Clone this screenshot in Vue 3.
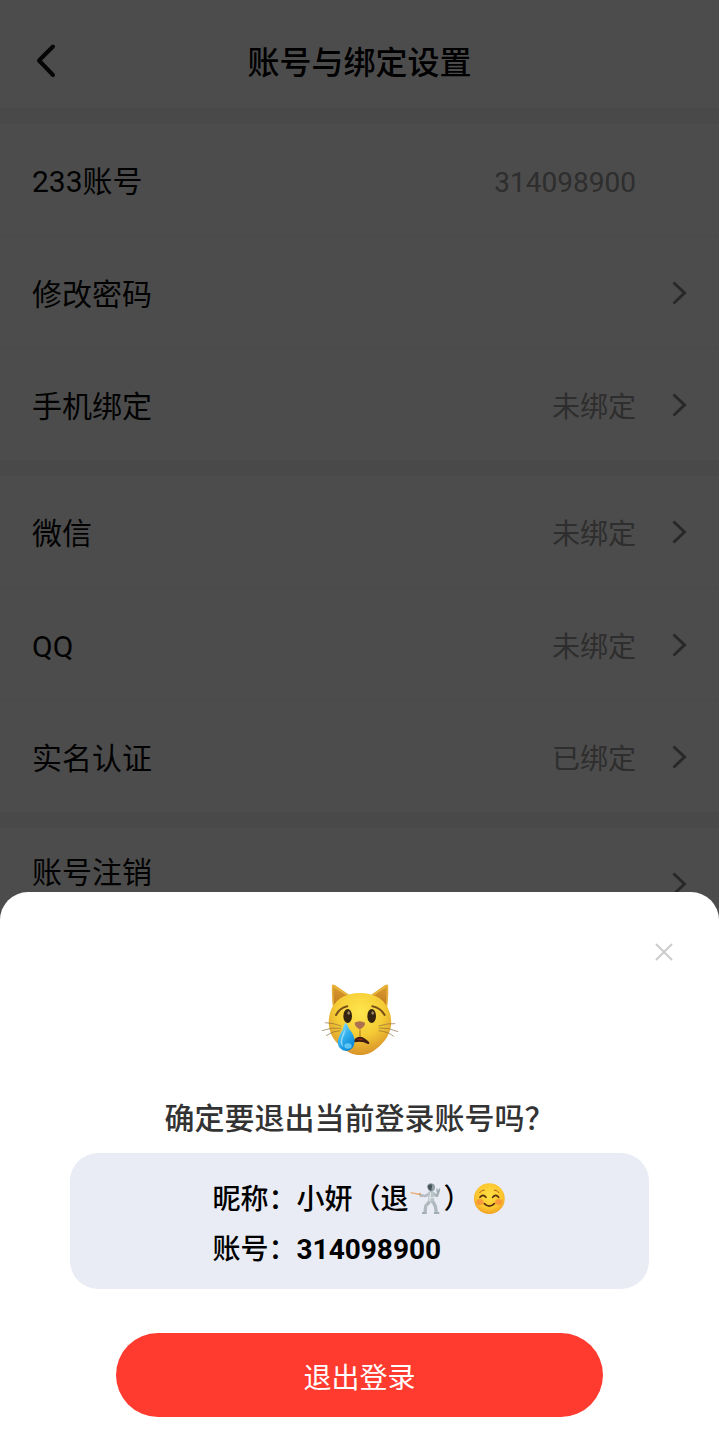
<script setup>
import { ref } from 'vue'

const account = '314098900'
const sheetOpen = ref(true)

const groups = [
  [
    { label: '233账号', value: account, link: false },
    { label: '修改密码', value: '', link: true },
    { label: '手机绑定', value: '未绑定', link: true },
  ],
  [
    { label: '微信', value: '未绑定', link: true },
    { label: 'QQ', value: '未绑定', link: true },
    { label: '实名认证', value: '已绑定', link: true },
  ],
  [{ label: '账号注销', value: '', link: true, tall: true }],
]
</script>

<template>
  <main class="page">
    <header class="bar">
      <button class="back" type="button" aria-label="返回">
        <svg width="24" height="36" viewBox="0 0 24 36">
          <path d="M20 3.500 6 17.500 20 32" />
        </svg>
      </button>
      <h1 class="title">账号与绑定设置</h1>
    </header>

    <ul v-for="(group, g) in groups" :key="g" class="group">
      <li v-for="row in group" :key="row.label" class="item">
        <component
          :is="row.link ? 'a' : 'div'"
          :href="row.link ? '#' : null"
          class="row"
          :class="{ tall: row.tall }"
        >
          <span class="label">{{ row.label }}</span>
          <span class="value">{{ row.value }}</span>
          <span class="arrow">
            <svg v-if="row.link" width="16" height="24" viewBox="0 0 16 24">
              <path d="M2.500 1.500 13.500 12 2.500 22.500" />
            </svg>
          </span>
        </component>
      </li>
    </ul>
  </main>

  <div v-if="sheetOpen" class="mask">
    <section class="sheet" role="dialog" aria-labelledby="ask">
      <button class="close" type="button" aria-label="关闭" @click="sheetOpen = false">
        <svg width="18" height="18" viewBox="0 0 18 18">
          <path d="M1.500 1.500 16.500 16.500M16.500 1.500 1.500 16.500" />
        </svg>
      </button>

      <svg class="cat" width="78" height="74" viewBox="64 41 234 222" aria-hidden="true">
        <defs>
          <radialGradient id="fur" cx="0.5" cy="0.3" r="0.7">
            <stop offset="0" stop-color="#ffe64d" />
            <stop offset="0.55" stop-color="#f5cc35" />
            <stop offset="1" stop-color="#d9932a" />
          </radialGradient>
          <linearGradient id="ear" x1="0" y1="0" x2="0" y2="1">
            <stop offset="0" stop-color="#d9992c" />
            <stop offset="1" stop-color="#c07a22" />
          </linearGradient>
          <linearGradient id="drop" x1="0" y1="0" x2="0.6" y2="1">
            <stop offset="0" stop-color="#a5eaff" />
            <stop offset="0.5" stop-color="#36b4ee" />
            <stop offset="1" stop-color="#0b86d6" />
          </linearGradient>
        </defs>
        <path d="M97 44Q101 40 107 45L155 78 101 122Q95 82 97 44Z" fill="#e6b13a" />
        <path d="M265 44Q261 40 255 45L208 78 261 122Q268 82 265 44Z" fill="#e6b13a" />
        <path d="M101 51 144 78 103 109Z" fill="url(#ear)" />
        <path d="M261 51 219 78 259 109Z" fill="url(#ear)" />
        <path d="M181 68C228 68 260 91 270 126C282 166 270 199 241 226C219 246 202 254 181 254C160 254 144 247 122 227C93 203 80 168 91 128C101 91 134 68 181 68Z" fill="url(#fur)" />
        <path d="M109 134Q120 113 143 108M255 134Q243 113 218 108" fill="none" stroke="#79501a" stroke-width="6" stroke-linecap="round" />
        <ellipse cx="144" cy="137" rx="13" ry="21" fill="#34230f" />
        <ellipse cx="216" cy="137" rx="13" ry="21" fill="#34230f" />
        <ellipse cx="147" cy="128" rx="4" ry="5" fill="#98866a" />
        <ellipse cx="219" cy="128" rx="4" ry="5" fill="#98866a" />
        <path d="M165 157Q180 148 196 157Q198 164 190 171Q180 182 171 171Q164 165 165 157Z" fill="#ac7150" />
        <path d="M181 178V198" stroke="#a8711d" stroke-width="3" />
        <path d="M164 213Q180 189 206 218Q186 207 164 213Z" fill="#a92917" stroke="#3f1d10" stroke-width="6" stroke-linejoin="round" />
        <path d="M76 157Q101 158 125 167M67 181Q99 169 125 174M79 196Q101 181 123 181M237 167Q267 158 287 160M237 173Q267 171 295 184M237 181Q266 184 282 198" fill="none" stroke="#8c6d3a" stroke-width="2" />
        <path d="M137 158Q142 158 147 174Q166 196 165 214Q162 240 140 242Q116 240 114 216Q115 199 129 178Q134 158 137 158Z" fill="url(#drop)" />
        <path d="M137 173Q130 190 124 205Q119 222 131 230Q123 211 134 193Z" fill="#c6f4ff" opacity="0.6" />
        <ellipse cx="145" cy="227" rx="11" ry="8" fill="#7cdcff" opacity="0.7" />
      </svg>

      <h2 id="ask" class="ask">确定要退出当前登录账号吗？</h2>

      <div class="card">
        <div class="info">
          <p class="line">
            <span>昵称：小妍（退</span>
            <svg class="emoji" width="35" height="35" viewBox="30 15 105 105" aria-hidden="true">
              <path d="M35 50 70 57" stroke="#e8ad72" stroke-width="4" />
              <path d="M62 51 66 63" stroke="#d38b4b" stroke-width="4" />
              <path d="M66 58 79 60 91 53" fill="none" stroke="#b3bdc2" stroke-width="8" stroke-linecap="round" stroke-linejoin="round" />
              <path d="M101 51 114 60 119 46" fill="none" stroke="#a5b0b6" stroke-width="7" stroke-linecap="round" stroke-linejoin="round" />
              <path d="M115 48 114 39M119 46 122 39" stroke="#9aa7ae" stroke-width="4" stroke-linecap="round" />
              <path d="M87 47Q97 43 107 49L105 75 109 81 86 82 88 68Z" fill="#bac4c9" />
              <path d="M91 77 80 91 78 108M102 77 109 91 112 108" fill="none" stroke="#aeb8be" stroke-width="10" stroke-linejoin="round" />
              <path d="M69 111H83M105 111H121" stroke="#8b999f" stroke-width="5" />
              <path d="M85 34Q84 22 96 22Q109 23 108 36Q107 46 97 47Q87 46 85 34Z" fill="#929fa5" />
              <path d="M86 30Q92 22 100 26L97 44Q87 43 86 30Z" fill="#46545b" />
              <path d="M95 50 92 76M90 65H105M83 91 90 94" stroke="#e4e9eb" stroke-width="3" />
            </svg>
            <span>）</span>
            <svg class="emoji" width="35" height="35" viewBox="215 15 105 105" aria-hidden="true">
              <defs>
                <radialGradient id="smile" cx="0.5" cy="0.4" r="0.6">
                  <stop offset="0" stop-color="#ffdf42" />
                  <stop offset="0.7" stop-color="#fcc62f" />
                  <stop offset="1" stop-color="#f2a023" />
                </radialGradient>
              </defs>
              <circle cx="267" cy="68" r="46" fill="url(#smile)" />
              <ellipse cx="239" cy="78" rx="11" ry="9" fill="#f7863b" opacity="0.7" />
              <ellipse cx="295" cy="78" rx="11" ry="9" fill="#f7863b" opacity="0.7" />
              <path d="M238 50Q243 42 252 42M282 42Q291 42 296 50" fill="none" stroke="#ad641a" stroke-width="3" stroke-linecap="round" />
              <path d="M239 64Q248 52 257 64M277 64Q286 52 295 64M252 83Q267 98 282 83" fill="none" stroke="#57320e" stroke-width="5" stroke-linecap="round" />
            </svg>
          </p>
          <p class="line">账号：<b>{{ account }}</b></p>
        </div>
      </div>

      <button class="logout" type="button">退出登录</button>
    </section>
  </div>
</template>

<style>
body {
  background: #fff;
}
</style>

<style scoped>
.page,
.mask {
  font-family: Roboto, 'Noto Sans CJK SC', sans-serif;
}

.page {
  background: #f5f5f5;
}

button {
  margin: 0;
  padding: 0;
  border: 0;
  background: none;
  font: inherit;
  cursor: pointer;
}

svg {
  display: block;
  flex: none;
}

.bar {
  display: grid;
  grid-template-columns: 68px 1fr 68px;
  align-items: center;
  height: 109px;
  padding-top: 14px;
  box-sizing: border-box;
  background: #fff;
  border-bottom: 1px solid #eee;
}

.back {
  padding: 0 0 0 33px;
}

.back path {
  fill: none;
  stroke: #111;
  stroke-width: 4;
  stroke-linecap: round;
  stroke-linejoin: round;
}

.title {
  margin: 0;
  padding-top: 4px;
  color: #000;
  font-size: 32px;
  font-weight: 500;
  line-height: 48px;
  text-align: center;
}

.group {
  margin: 16px 0 0;
  padding: 0;
  list-style: none;
  background: #fff;
}

.bar + .group {
  margin-top: 15px;
}

.row {
  display: flex;
  align-items: center;
  min-height: 112px;
  padding: 0 32px;
  box-sizing: border-box;
  color: #080808;
  text-decoration: none;
}

.item + .item .row {
  border-top: 1px solid #f5f5f5;
}

.label {
  flex: 1;
  padding-top: 4px;
  font-size: 30px;
  line-height: 44px;
}

.tall .label {
  padding-bottom: 26px;
}

.value {
  padding-top: 6px;
  color: #999;
  font-size: 28px;
  line-height: 40px;
}

.arrow {
  width: 16px;
  margin-left: 35px;
}

.arrow path {
  fill: none;
  stroke: #888;
  stroke-width: 3;
}

.mask {
  position: fixed;
  inset: 0;
  display: flex;
  align-items: flex-end;
  background: rgba(0, 0, 0, 0.7);
}

.sheet {
  position: relative;
  display: flex;
  flex-direction: column;
  align-items: center;
  width: 100%;
  padding: 92px 70px 15px;
  box-sizing: border-box;
  background: #fff;
  border-radius: 28px 28px 0 0;
}

.close {
  position: absolute;
  top: 42px;
  right: 37px;
  padding: 9px;
}

.close path {
  fill: none;
  stroke: #ccc;
  stroke-width: 2;
  stroke-linecap: round;
}

.ask {
  margin: 37px 0 10px;
  color: #333;
  font-size: 30px;
  font-weight: 500;
  line-height: 48px;
  white-space: nowrap;
}

.card {
  display: flex;
  justify-content: center;
  width: 100%;
  padding: 22px 0 14px;
  box-sizing: border-box;
  background: #e9ecf4;
  border-radius: 28px;
}

.line {
  display: flex;
  align-items: center;
  margin: 0;
  color: #000;
  font-size: 28px;
  font-weight: 500;
  line-height: 50px;
  white-space: nowrap;
}

.line b {
  font-weight: 700;
}

.emoji {
  margin-bottom: 4px;
}

.logout {
  align-self: stretch;
  height: 84px;
  margin: 44px 46px 0;
  padding-top: 2px;
  color: #fff;
  font-size: 28px;
  background: #ff3b30;
  border-radius: 42px;
}
</style>
